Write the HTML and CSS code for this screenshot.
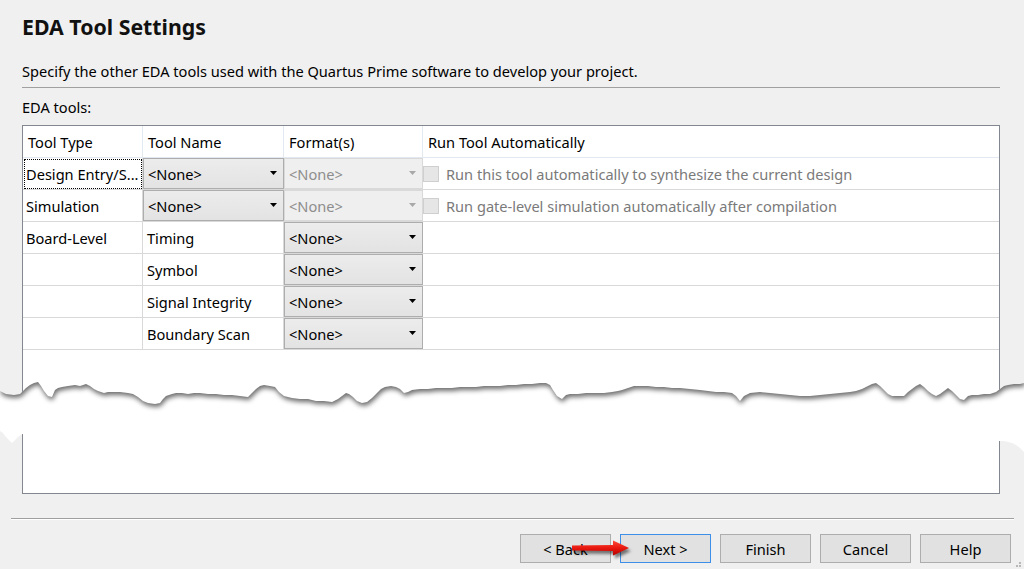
FILE: index.html
```html
<!DOCTYPE html>
<html>
<head>
<meta charset="utf-8">
<title>EDA Tool Settings</title>
<link rel="stylesheet" href="styles.css">
</head>
<body>
<div class="page">
  <h1 class="title">EDA Tool Settings</h1>
  <p class="desc">Specify the other EDA tools used with the Quartus Prime software to develop your project.</p>
  <div class="rule"></div>
  <div class="label">EDA tools:</div>
  <div class="tablebox">
    <div class="grid">
      <div class="hcell">Tool Type</div>
      <div class="hcell">Tool Name</div>
      <div class="hcell">Format(s)</div>
      <div class="hcell last">Run Tool Automatically</div>

      <div class="cell"><span class="focus">Design Entry/S...</span></div>
      <div class="cell cc"><div class="combo"><span>&lt;None&gt;</span><svg class="caret" width="7" height="4" viewBox="0 0 7 4"><path d="M0 0H7L3.5 4Z"/></svg></div></div>
      <div class="cell cc"><div class="combo off"><span>&lt;None&gt;</span><svg class="caret" width="7" height="4" viewBox="0 0 7 4"><path d="M0 0H7L3.5 4Z"/></svg></div></div>
      <div class="cell last chk"><span class="box"></span><span class="chktext">Run this tool automatically to synthesize the current design</span></div>

      <div class="cell">Simulation</div>
      <div class="cell cc"><div class="combo"><span>&lt;None&gt;</span><svg class="caret" width="7" height="4" viewBox="0 0 7 4"><path d="M0 0H7L3.5 4Z"/></svg></div></div>
      <div class="cell cc"><div class="combo off"><span>&lt;None&gt;</span><svg class="caret" width="7" height="4" viewBox="0 0 7 4"><path d="M0 0H7L3.5 4Z"/></svg></div></div>
      <div class="cell last chk"><span class="box"></span><span class="chktext">Run gate-level simulation automatically after compilation</span></div>

      <div class="cell">Board-Level</div>
      <div class="cell sub">Timing</div>
      <div class="cell cc"><div class="combo"><span>&lt;None&gt;</span><svg class="caret" width="7" height="4" viewBox="0 0 7 4"><path d="M0 0H7L3.5 4Z"/></svg></div></div>
      <div class="cell last"></div>

      <div class="cell"></div>
      <div class="cell sub">Symbol</div>
      <div class="cell cc"><div class="combo"><span>&lt;None&gt;</span><svg class="caret" width="7" height="4" viewBox="0 0 7 4"><path d="M0 0H7L3.5 4Z"/></svg></div></div>
      <div class="cell last"></div>

      <div class="cell"></div>
      <div class="cell sub">Signal Integrity</div>
      <div class="cell cc"><div class="combo"><span>&lt;None&gt;</span><svg class="caret" width="7" height="4" viewBox="0 0 7 4"><path d="M0 0H7L3.5 4Z"/></svg></div></div>
      <div class="cell last"></div>

      <div class="cell"></div>
      <div class="cell sub">Boundary Scan</div>
      <div class="cell cc"><div class="combo"><span>&lt;None&gt;</span><svg class="caret" width="7" height="4" viewBox="0 0 7 4"><path d="M0 0H7L3.5 4Z"/></svg></div></div>
      <div class="cell last"></div>
    </div>
  </div>
  <div class="sep"></div>
  <div class="buttons">
    <button class="btn">&lt; Back</button>
    <button class="btn default">Next &gt;</button>
    <button class="btn">Finish</button>
    <button class="btn">Cancel</button>
    <button class="btn">Help</button>
  </div>
</div>

<svg class="tear" width="1024" height="90" viewBox="0 370 1024 90">
  <defs>
    <filter id="soft" x="-5%" y="-50%" width="110%" height="200%">
      <feGaussianBlur stdDeviation="2.8"/>
    </filter>
    <clipPath id="gapclip">
      <polygon id="gp" points="0,391 6,394 14,395 20,394 26,388 30,385 34,383 38,382 41,386 44,391 48,396 52,397 55,390 58,388 62,387 68,386 75,385 80,386 86,384 90,386 94,389 98,391 104,393 108,392 113,392 120,392 128,393 133,394 138,397 143,401 148,403 155,404 160,403 163,399 166,396 172,394 176,393 182,393 188,394 194,393 200,393 208,394 216,394 224,395 232,395 240,396 248,397 252,393 256,389 260,386 264,385 270,386 275,387 279,392 284,396 292,398 300,399 308,399 316,401 324,401 332,402 338,399 342,396 346,393 349,394 353,397 357,401 362,403 367,402 372,398 377,393 381,389 385,387 391,386 396,387 400,389 404,393 408,392 412,390 420,389 428,389 436,388 444,388 452,388 460,387 468,387 476,387 484,386 492,386 500,386 508,385 516,385 524,384 532,384 540,383 546,383 550,385 553,390 557,396 562,399 566,395 570,394 578,394 586,393 596,393 604,393 612,392 618,391 622,390 628,388 634,386 640,386 648,386 656,387 664,387 672,388 680,388 690,389 700,390 708,391 716,392 724,392 732,393 736,396 740,401 744,396 750,393 760,392 770,393 780,394 790,395 800,396 810,396 820,395 830,394 840,393 850,392 856,391 862,389 868,386 872,384 876,383 880,386 884,390 888,394 892,396 898,396 904,396 908,392 912,389 916,386 920,384 924,387 928,391 932,394 936,396 940,394 944,391 948,388 952,391 956,395 960,399 964,400 968,396 972,395 978,395 984,394 990,394 996,392 1000,389 1004,386 1008,385 1014,384 1020,384 1024,383 1024,452 1020,448 1016,445 1012,443 1008,442 1004,441 1000,441 900,440 700,441 500,440 300,441 100,439 40,437 22,434 18,437 15,440 12,443 9,440 6,437 3,433 0,431"/>
    </clipPath>
  </defs>
  <use href="#gp" fill="#ffffff"/>
  <g clip-path="url(#gapclip)">
    <polygon fill="#000" fill-opacity="0.58" filter="url(#soft)" transform="translate(1,3)" points="0,360 1024,360 1024,383 1020,384 1014,384 1008,385 1004,386 1000,389 996,392 990,394 984,394 978,395 972,395 968,396 964,400 960,399 956,395 952,391 948,388 944,391 940,394 936,396 932,394 928,391 924,387 920,384 916,386 912,389 908,392 904,396 898,396 892,396 888,394 884,390 880,386 876,383 872,384 868,386 862,389 856,391 850,392 840,393 830,394 820,395 810,396 800,396 790,395 780,394 770,393 760,392 750,393 744,396 740,401 736,396 732,393 724,392 716,392 708,391 700,390 690,389 680,388 672,388 664,387 656,387 648,386 640,386 634,386 628,388 622,390 618,391 612,392 604,393 596,393 586,393 578,394 570,394 566,395 562,399 557,396 553,390 550,385 546,383 540,383 532,384 524,384 516,385 508,385 500,386 492,386 484,386 476,387 468,387 460,387 452,388 444,388 436,388 428,389 420,389 412,390 408,392 404,393 400,389 396,387 391,386 385,387 381,389 377,393 372,398 367,402 362,403 357,401 353,397 349,394 346,393 342,396 338,399 332,402 324,401 316,401 308,399 300,399 292,398 284,396 279,392 275,387 270,386 264,385 260,386 256,389 252,393 248,397 240,396 232,395 224,395 216,394 208,394 200,393 194,393 188,394 182,393 176,393 172,394 166,396 163,399 160,403 155,404 148,403 143,401 138,397 133,394 128,393 120,392 113,392 108,392 104,393 98,391 94,389 90,386 86,384 80,386 75,385 68,386 62,387 58,388 55,390 52,397 48,396 44,391 41,386 38,382 34,383 30,385 26,388 20,394 14,395 6,394 0,391"/>
  </g>
</svg>

<svg class="arrow" width="75" height="28" viewBox="565 533 75 28">
  <defs>
    <linearGradient id="red" x1="0" y1="0" x2="0" y2="1">
      <stop offset="0" stop-color="#ff4a3a"/>
      <stop offset="0.5" stop-color="#e8180f"/>
      <stop offset="1" stop-color="#b80000"/>
    </linearGradient>
    <filter id="ashadow" x="-20%" y="-50%" width="140%" height="200%">
      <feGaussianBlur stdDeviation="1.6"/>
    </filter>
  </defs>
  <polygon fill="#000" fill-opacity="0.5" filter="url(#ashadow)" transform="translate(2,3)" points="572,545.5 613,545 613,540.5 629,548 613,555.5 613,551 572,550.5"/>
  <polygon fill="url(#red)" points="572,545.5 613,545 613,540.5 629,548 613,555.5 613,551 572,550.5"/>
</svg>

<svg class="grip" width="8" height="8" viewBox="0 0 8 8">
  <rect x="5" y="1" width="2" height="2" fill="#b8b8b8"/>
  <rect x="2" y="4" width="2" height="2" fill="#b8b8b8"/>
  <rect x="5" y="4" width="2" height="2" fill="#b8b8b8"/>
</svg>
</body>
</html>
```

FILE: styles.css
```css
html, body {
  margin: 0;
  padding: 0;
}
body {
  width: 1024px;
  height: 569px;
  overflow: hidden;
  position: relative;
  background: #f0f0f0;
  font-family: "Noto Sans", "Open Sans", sans-serif;
  font-size: 14.6px;
  color: #000;
}
.page {
  padding: 15px 24px 0 22px;
}
.title {
  margin: 0;
  font-size: 21.3px;
  font-weight: 700;
  line-height: 24px;
  color: #111;
}
.desc {
  margin: 23px 0 0 0;
  line-height: 18px;
}
.rule {
  margin-top: 7px;
  height: 1px;
  background: #a0a0a0;
}
.label {
  margin-top: 10px;
  line-height: 18px;
}
.tablebox {
  margin-top: 9px;
  height: 367px;
  border: 1px solid #828790;
  background: #fff;
}
.grid {
  display: grid;
  grid-template-columns: 120px 141px 139px 1fr;
  grid-auto-rows: 32px;
}
.hcell, .cell {
  box-sizing: border-box;
  display: flex;
  align-items: center;
  white-space: nowrap;
  overflow: hidden;
}
.hcell {
  padding-left: 5px;
  border-right: 1px solid #e3e9f1;
  border-bottom: 1px solid #e3e9f1;
  color: #000;
}
.cell {
  padding-left: 3px;
  border-right: 1px solid #d9d9d9;
  border-bottom: 1px solid #d9d9d9;
}
.hcell.last, .cell.last {
  border-right: 0;
}
.cell.sub {
  padding-left: 4px;
}
.focus {
  box-sizing: border-box;
  display: flex;
  align-items: center;
  width: 118px;
  height: 30px;
  margin-left: -2px;
  padding-left: 1px;
  border: 1px dotted #000;
}
.cell.cc {
  padding: 0;
  border-right: 0;
}
.combo {
  box-sizing: border-box;
  flex: 1;
  height: 100%;
  display: flex;
  align-items: center;
  justify-content: space-between;
  padding: 0 6px 0 4px;
  border: 1px solid #adadad;
  background: linear-gradient(#ececec, #e3e3e3);
}
.combo.off {
  border-color: #d9d9d9;
  background: #efefef;
  color: #8d8d8d;
}
.caret {
  display: block;
  fill: #000;
  margin-bottom: 1px;
}
.combo.off .caret {
  fill: #a8a8a8;
}
.cell.chk {
  padding-left: 0;
}
.box {
  box-sizing: border-box;
  width: 16px;
  height: 16px;
  border: 1px solid #cfcfcf;
  background: #e6e6e6;
  margin-right: 7px;
  flex: none;
}
.chktext {
  color: #7a7a7a;
}
.sep {
  margin: 24px -14px 0 -11px;
  height: 1px;
  background: #a0a0a0;
  border-bottom: 1px solid #ffffff;
}
.buttons {
  margin: 14px -11px 0 0;
  display: flex;
  justify-content: flex-end;
  gap: 9px;
}
.btn {
  box-sizing: border-box;
  width: 91px;
  height: 29px;
  padding: 0;
  border: 1px solid #adadad;
  background: #e1e1e1;
  font-family: "Noto Sans", "Open Sans", sans-serif;
  font-size: 14.6px;
  color: #000;
}
.btn.default {
  border-color: #3d8fe8;
}
.tear {
  position: absolute;
  left: 0;
  top: 370px;
}
.arrow {
  position: absolute;
  left: 565px;
  top: 533px;
}
.grip {
  position: absolute;
  left: 1014px;
  top: 561px;
}
```
